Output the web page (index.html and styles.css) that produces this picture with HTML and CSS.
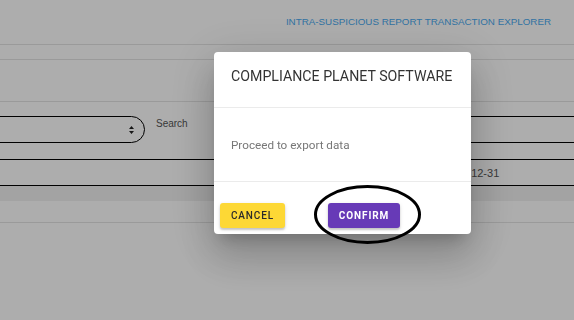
FILE: index.html
```html
<!DOCTYPE html>
<html lang="en">
<head>
    <meta charset="UTF-8">
    <meta name="viewport" content="width=device-width, initial-scale=1.0">
    <title>Transaction Explorer</title>
    <link rel="stylesheet" href="styles.css">
</head>
<body>
    <div class="page">
        <header class="topbar">
            <a class="topbar-link" href="#">INTRA-SUSPICIOUS REPORT TRANSACTION EXPLORER</a>
        </header>
        <div class="tabs"></div>
        <div class="toolbar"></div>

        <div class="filters">
            <div class="select-box">
                <span class="select-arrow">
                    <svg width="7" height="10" viewBox="0 0 7 10"><path d="M3.5 1 L6 4 H1 Z M3.5 9 L6 6 H1 Z" fill="#222"/></svg>
                </span>
            </div>
            <label class="search-label">Search</label>
            <div class="search-box"></div>
        </div>

        <div class="date-row">
            <span class="date-value">2021-12-31</span>
        </div>
        <div class="table-head"></div>
        <div class="table-row"></div>
    </div>

    <div class="overlay"></div>

    <div class="dialog">
        <div class="dialog-title">COMPLIANCE PLANET SOFTWARE</div>
        <div class="dialog-body">Proceed to export data</div>
        <div class="dialog-actions">
            <button class="btn btn-cancel">CANCEL</button>
            <button class="btn btn-confirm">CONFIRM</button>
            <svg class="circle-mark" width="109" height="61" viewBox="0 0 109 61">
                <ellipse cx="54.5" cy="30.5" rx="52" ry="28" fill="none" stroke="#000" stroke-width="3"/>
            </svg>
        </div>
    </div>
</body>
</html>
```

FILE: styles.css
```css
body {
    margin: 0;
    font-family: 'Roboto', sans-serif;
    background-color: #fff;
    overflow: hidden;
}
.page {
    width: 574px;
    height: 320px;
}
.topbar {
    height: 44px;
    border-bottom: 1px solid #e4e4e4;
    display: flex;
    justify-content: flex-end;
    align-items: center;
    padding-right: 23px;
    box-sizing: content-box;
}
.topbar-link {
    font-family: 'Liberation Sans', Arial, sans-serif;
    font-size: 9.8px;
    color: #4aaaf0;
    text-decoration: none;
    margin-top: -2px;
}
.tabs {
    height: 14px;
    border-bottom: 1px solid #e4e4e4;
}
.toolbar {
    height: 41px;
    border-bottom: 1px solid #e4e4e4;
}
.filters {
    display: flex;
    align-items: flex-start;
    margin-top: 14px;
    height: 29px;
}
.select-box {
    width: 194px;
    height: 25px;
    margin-left: -60px;
    border: 1.5px solid #000;
    border-radius: 14px;
    display: flex;
    justify-content: flex-end;
    align-items: center;
    padding-right: 9px;
    box-sizing: content-box;
    flex-shrink: 0;
}
.select-arrow {
    display: flex;
}
.search-label {
    font-family: 'Liberation Sans', Arial, sans-serif;
    font-size: 10px;
    color: #555;
    margin-left: 11px;
    margin-top: 2px;
}
.search-box {
    flex: 1;
    height: 25px;
    margin-left: 30px;
    border-top: 1.5px solid #000;
    border-bottom: 1.5px solid #000;
}
.date-row {
    margin-top: 14px;
    height: 25px;
    border-top: 1.5px solid #000;
    border-bottom: 1.5px solid #000;
    display: flex;
    align-items: center;
    padding-left: 443px;
}
.date-value {
    font-family: 'Liberation Sans', Arial, sans-serif;
    font-size: 11px;
    color: #555;
}
.table-head {
    height: 15px;
    background-color: #f0f0f0;
}
.table-row {
    height: 21px;
    border-bottom: 1px solid #e4e4e4;
}
.overlay {
    position: fixed;
    top: 0;
    left: 0;
    right: 0;
    bottom: 0;
    background: rgba(0, 0, 0, 0.32);
}
.dialog {
    position: fixed;
    left: 214px;
    top: 52px;
    width: 257px;
    background: #fff;
    border-radius: 4px;
    box-shadow: 0 11px 15px -7px rgba(0, 0, 0, 0.2), 0 24px 38px 3px rgba(0, 0, 0, 0.14), 0 9px 46px 8px rgba(0, 0, 0, 0.12);
}
.dialog-title {
    height: 56px;
    padding: 16px 0 0 17px;
    box-sizing: border-box;
    font-size: 14.2px;
    color: #333;
    border-bottom: 1px solid #ebebeb;
}
.dialog-body {
    height: 74px;
    display: flex;
    align-items: center;
    padding-left: 17px;
    padding-top: 1px;
    box-sizing: border-box;
    font-size: 11.7px;
    color: #777;
    border-bottom: 1px solid #ebebeb;
}
.dialog-actions {
    position: relative;
    display: flex;
    gap: 43px;
    padding: 21px 6px 6px;
}
.btn {
    height: 25px;
    border: none;
    border-radius: 3px;
    font-family: 'Roboto', sans-serif;
    font-size: 10px;
    font-weight: 500;
    letter-spacing: 0.9px;
    padding: 0;
    cursor: pointer;
    box-shadow: 0 2px 2px rgba(0, 0, 0, 0.18), 0 1px 4px rgba(0, 0, 0, 0.1);
}
.btn-cancel {
    width: 65px;
    background-color: #fdd835;
    color: #2b2b2b;
}
.btn-confirm {
    width: 72px;
    background-color: #673ab7;
    color: #fff;
    font-weight: 700;
}
.circle-mark {
    position: absolute;
    left: 99px;
    top: 2px;
    pointer-events: none;
}
```
